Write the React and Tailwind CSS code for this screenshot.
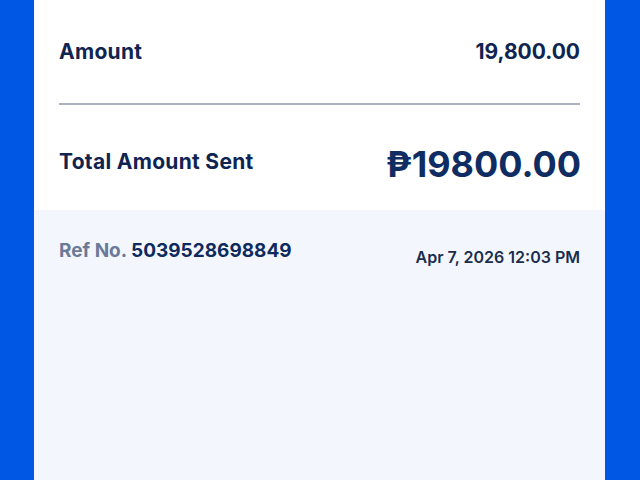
import React from "react";

export default function App() {
  return (
    <div
      className="h-[480px] w-full flex bg-[#0057e4] overflow-hidden"
      style={{ fontFamily: "Inter, 'Noto Sans', sans-serif" }}
    >
      <div className="w-[34px] shrink-0" />
      <div className="flex-1 flex flex-col bg-[#f3f7fd]">
        <div className="bg-white px-[25px]">
          <div className="h-[103px] flex items-center justify-between pt-[1px]">
            <div className="text-[21px] font-bold text-[#0f2450] tracking-[0.3px]">Amount</div>
            <div className="text-[21px] font-bold text-[#0f2450]">19,800.00</div>
          </div>
          <div className="h-[2px] bg-[#a9b2c1]" />
          <div className="h-[105px] flex items-center justify-between pt-[12px]">
            <div className="text-[21px] font-bold text-[#0f2450] tracking-[0.3px] mb-[4px]">
              Total Amount Sent
            </div>
            <div className="text-[36px] font-bold text-[#0f2d63] mr-[-1px]">₱19800.00</div>
          </div>
        </div>
        <div className="px-[25px] pt-[27px] flex justify-between">
          <div className="text-[19px] font-bold">
            <span className="text-[#6a7a98]">Ref No.</span>{" "}
            <span className="text-[#0f2a5e]">5039528698849</span>
          </div>
          <div className="text-[16px] font-semibold text-[#1b2d4f] mt-[8px]">
            Apr 7, 2026 12:03 PM
          </div>
        </div>
      </div>
      <div className="w-[35px] shrink-0" />
    </div>
  );
}
